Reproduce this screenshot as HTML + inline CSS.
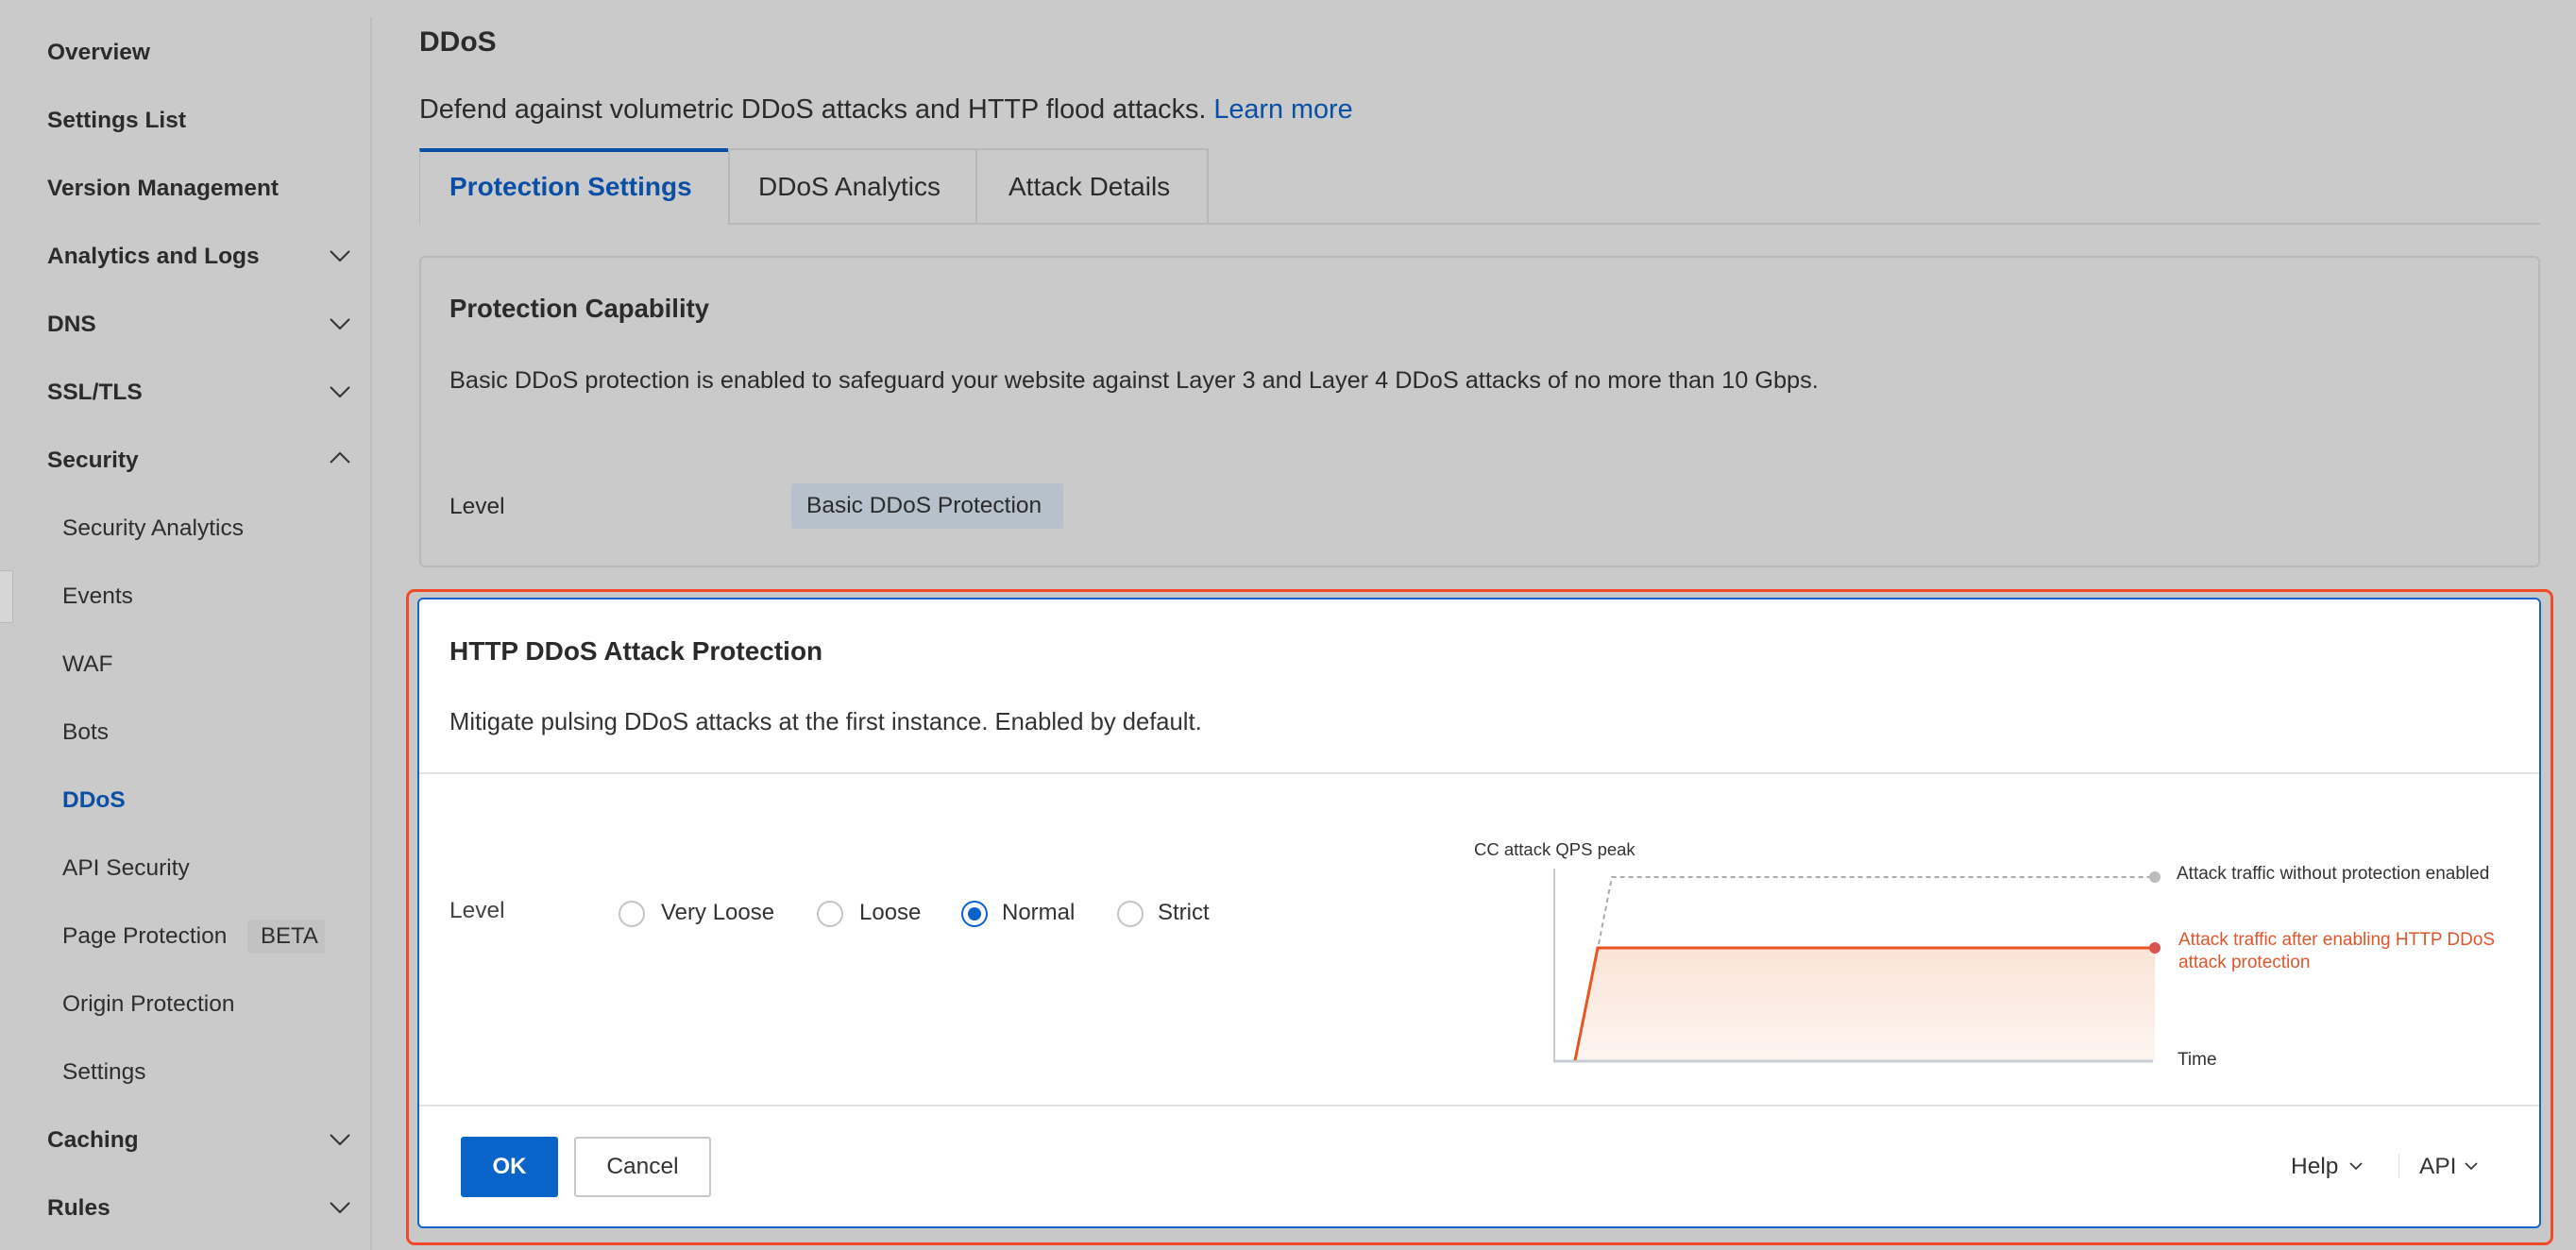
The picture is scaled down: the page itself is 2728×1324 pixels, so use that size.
<!DOCTYPE html>
<html><head><meta charset="utf-8"><style>
*{margin:0;padding:0;box-sizing:border-box}
body{width:2728px;height:1324px;background:#cacaca;font-family:"Liberation Sans",sans-serif;color:#2b2b2b;position:relative;overflow:hidden}
.a{position:absolute;white-space:nowrap}
.nav{left:50px;font-size:24.5px;font-weight:bold;line-height:30px}
.sub{left:66px;font-size:24.5px;line-height:30px;color:#2e2e2e}
.chev{position:absolute;left:349px;width:22px;height:12px}
.radio{position:absolute;width:28px;height:28px;border-radius:50%;border:2px solid #c4c4c4;background:#fff}
.rl{font-size:24px;line-height:30px;color:#333}
</style></head><body>
<div class="a" style="left:392px;top:18px;width:2px;height:1306px;background:#bdbdbd"></div>
<div class="a" style="left:0;top:604px;width:14px;height:56px;background:#d6d6d6;border:1px solid #b8b8b8;border-left:none"></div>
<div class="a nav" style="top:41px">Overview</div>
<div class="a nav" style="top:113px">Settings List</div>
<div class="a nav" style="top:185px">Version Management</div>
<div class="a nav" style="top:257px">Analytics and Logs</div>
<div class="a nav" style="top:329px">DNS</div>
<div class="a nav" style="top:401px">SSL/TLS</div>
<div class="a nav" style="top:473px">Security</div>
<div class="a sub" style="top:545px">Security Analytics</div>
<div class="a sub" style="top:617px">Events</div>
<div class="a sub" style="top:689px">WAF</div>
<div class="a sub" style="top:761px">Bots</div>
<div class="a sub" style="top:833px;color:#0a4fa6;font-weight:bold">DDoS</div>
<div class="a sub" style="top:905px">API Security</div>
<div class="a sub" style="top:977px">Page Protection</div>
<div class="a" style="left:262px;top:974px;width:82px;height:36px;background:#c2c2c2;border-radius:3px;font-size:24px;line-height:36px;padding-left:14px;color:#2e2e2e">BETA</div>
<div class="a sub" style="top:1049px">Origin Protection</div>
<div class="a sub" style="top:1121px">Settings</div>
<div class="a nav" style="top:1193px">Caching</div>
<div class="a nav" style="top:1265px">Rules</div>
<svg class="chev" style="top:265px" viewBox="0 0 22 12"><path d="M1 1l10 10 10-10" fill="none" stroke="#333" stroke-width="2"/></svg>
<svg class="chev" style="top:337px" viewBox="0 0 22 12"><path d="M1 1l10 10 10-10" fill="none" stroke="#333" stroke-width="2"/></svg>
<svg class="chev" style="top:409px" viewBox="0 0 22 12"><path d="M1 1l10 10 10-10" fill="none" stroke="#333" stroke-width="2"/></svg>
<svg class="chev" style="top:479px" viewBox="0 0 22 12"><path d="M1 11l10-10 10 10" fill="none" stroke="#333" stroke-width="2"/></svg>
<svg class="chev" style="top:1201px" viewBox="0 0 22 12"><path d="M1 1l10 10 10-10" fill="none" stroke="#333" stroke-width="2"/></svg>
<svg class="chev" style="top:1273px" viewBox="0 0 22 12"><path d="M1 1l10 10 10-10" fill="none" stroke="#333" stroke-width="2"/></svg>

<div class="a" style="left:444px;top:27px;font-size:30px;font-weight:bold;line-height:36px">DDoS</div>
<div class="a" style="left:444px;top:99px;font-size:28.8px;line-height:34px">Defend against volumetric DDoS attacks and HTTP flood attacks. <span style="color:#0a4fa6">Learn more</span></div>
<div class="a" style="left:444px;top:236px;width:2246px;height:2px;background:#b8b8b8"></div>
<div class="a" style="left:444px;top:157px;width:327px;height:81px;background:#cacaca;border-left:1px solid #b8b8b8;border-top:4px solid #0a4fa6"></div>
<div class="a" style="left:771px;top:157px;width:264px;height:80px;border:2px solid #b8b8b8;border-bottom:none"></div>
<div class="a" style="left:1033px;top:157px;width:247px;height:80px;border:2px solid #b8b8b8;border-bottom:none;border-left:none"></div>
<div class="a" style="left:476px;top:181px;font-size:28px;line-height:34px;color:#0a4fa6;font-weight:bold">Protection Settings</div>
<div class="a" style="left:803px;top:181px;font-size:28px;line-height:34px">DDoS Analytics</div>
<div class="a" style="left:1068px;top:181px;font-size:28px;line-height:34px">Attack Details</div>
<div class="a" style="left:444px;top:271px;width:2246px;height:330px;border:2px solid #b8b8b8;border-radius:6px"></div>
<div class="a" style="left:476px;top:311px;font-size:27.5px;font-weight:bold;line-height:32px">Protection Capability</div>
<div class="a" style="left:476px;top:388px;font-size:25.3px;line-height:30px">Basic DDoS protection is enabled to safeguard your website against Layer 3 and Layer 4 DDoS attacks of no more than 10 Gbps.</div>
<div class="a" style="left:476px;top:522px;font-size:24.5px;line-height:30px">Level</div>
<div class="a" style="left:838px;top:512px;width:288px;height:48px;background:#b6c1cb;border-radius:3px;font-size:24.5px;line-height:48px;padding-left:16px">Basic DDoS Protection</div>
<div class="a" style="left:430px;top:624px;width:2274px;height:695px;border:3px solid #f04a28;border-radius:9px;background:#c8c8c8"></div>
<div class="a" style="left:442px;top:633px;width:2249px;height:668px;border:2px solid #1565c8;border-radius:6px;background:#fff"></div>
<div class="a" style="left:476px;top:674px;font-size:28px;font-weight:bold;line-height:32px">HTTP DDoS Attack Protection</div>
<div class="a" style="left:476px;top:750px;font-size:25.6px;line-height:30px;color:#333">Mitigate pulsing DDoS attacks at the first instance. Enabled by default.</div>
<div class="a" style="left:444px;top:818px;width:2245px;height:2px;background:#e3e3e3"></div>
<div class="a" style="left:476px;top:950px;font-size:24.5px;line-height:30px;color:#444">Level</div>
<div class="radio" style="left:655px;top:954px"></div><div class="a rl" style="left:700px;top:952px">Very Loose</div>
<div class="radio" style="left:865px;top:954px"></div><div class="a rl" style="left:910px;top:952px">Loose</div>
<div class="radio" style="left:1018px;top:954px;border-color:#0a63c9"><div style="position:absolute;left:5px;top:5px;width:14px;height:14px;border-radius:50%;background:#0a63c9"></div></div><div class="a rl" style="left:1061px;top:952px">Normal</div>
<div class="radio" style="left:1183px;top:954px"></div><div class="a rl" style="left:1226px;top:952px">Strict</div>
<svg class="a" style="left:1540px;top:880px" width="1150" height="260" viewBox="1540 880 1150 260">
<defs><linearGradient id="g" x1="0" y1="0" x2="0" y2="1"><stop offset="0" stop-color="#fbe3d6"/><stop offset="1" stop-color="#fdf5f1"/></linearGradient></defs>
<polygon points="1668,1123 1692,1004 2282,1004 2282,1123" fill="url(#g)"/>
<line x1="1646" y1="920" x2="1646" y2="1125" stroke="#c8cdd3" stroke-width="2"/>
<line x1="1645" y1="1124" x2="2280" y2="1124" stroke="#c8cdd3" stroke-width="3"/>
<polyline points="1693,1000 1707,929 2282,929" fill="none" stroke="#aaa" stroke-width="2" stroke-dasharray="5,4"/>
<circle cx="2282" cy="929" r="6" fill="#bbb"/>
<polyline points="1668,1123 1692,1004 2282,1004" fill="none" stroke="#e8551e" stroke-width="3"/>
<circle cx="2282" cy="1004" r="6" fill="#d9534f"/>
<text x="1561" y="906" font-size="18.5" fill="#333" font-family="Liberation Sans">CC attack QPS peak</text>
<text x="2305" y="931" font-size="19" fill="#333" font-family="Liberation Sans">Attack traffic without protection enabled</text>
<text x="2307" y="1001" font-size="19" fill="#e0552a" font-family="Liberation Sans">Attack traffic after enabling HTTP DDoS</text>
<text x="2307" y="1025" font-size="19" fill="#e0552a" font-family="Liberation Sans">attack protection</text>
<text x="2306" y="1128" font-size="19" fill="#333" font-family="Liberation Sans">Time</text>
</svg>
<div class="a" style="left:444px;top:1170px;width:2245px;height:2px;background:#e3e3e3"></div>
<div class="a" style="left:488px;top:1204px;width:103px;height:64px;background:#0a63c9;border-radius:3px;color:#fff;font-size:24px;font-weight:bold;line-height:64px;text-align:center">OK</div>
<div class="a" style="left:608px;top:1204px;width:145px;height:64px;border:2px solid #c8c8c8;border-radius:3px;font-size:24.5px;line-height:60px;text-align:center;color:#333">Cancel</div>
<div class="a" style="left:2426px;top:1221px;font-size:24.5px;line-height:30px;color:#333">Help</div>
<svg class="a" style="left:2488px;top:1231px" width="14" height="9" viewBox="0 0 14 9"><path d="M1 1l6 6 6-6" fill="none" stroke="#333" stroke-width="1.6"/></svg>
<div class="a" style="left:2540px;top:1222px;width:1px;height:26px;background:#ddd"></div>
<div class="a" style="left:2562px;top:1221px;font-size:24.5px;line-height:30px;color:#333">API</div>
<svg class="a" style="left:2610px;top:1231px" width="14" height="9" viewBox="0 0 14 9"><path d="M1 1l6 6 6-6" fill="none" stroke="#333" stroke-width="1.6"/></svg>
</body></html>
